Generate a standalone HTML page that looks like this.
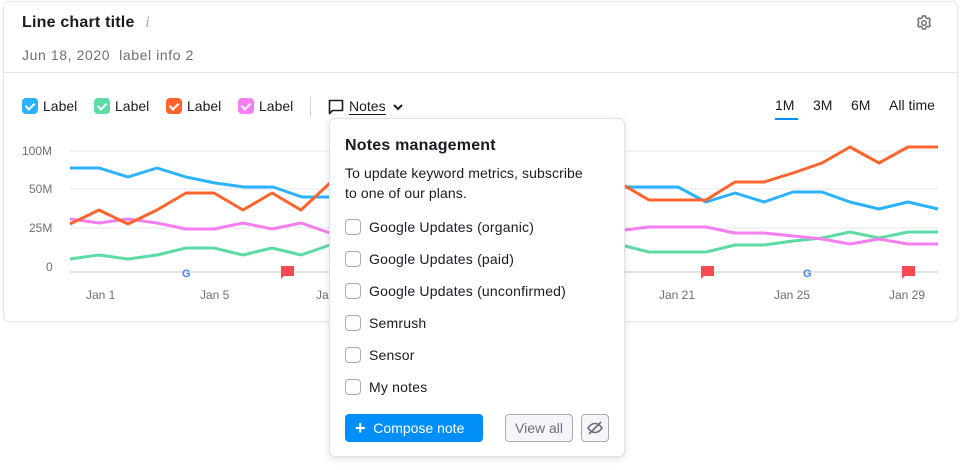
<!DOCTYPE html>
<html><head><style>
*{box-sizing:border-box;margin:0;padding:0}
body{width:960px;height:470px;background:#fff;font-family:"Liberation Sans",sans-serif;position:relative;overflow:hidden;color:#191b23}
.card{position:absolute;left:3px;top:1px;width:955px;height:321px;border:1px solid #e6e7ed;border-radius:6px;box-shadow:0 1px 2px rgba(0,0,0,.06)}
.abs{position:absolute;white-space:nowrap}
.t{left:22px;top:14px;font-size:16px;font-weight:bold;letter-spacing:.2px}
.sub{left:22px;top:47px;font-size:14px;color:#6c6e79;letter-spacing:.6px}
.hr{left:3px;top:72px;width:955px;height:1px;background:#e0e1e9}
.cb{width:16px;height:16px;border-radius:4px;display:inline-block;vertical-align:middle;position:relative}
.cb:after{content:"";position:absolute;left:5px;top:3px;width:4px;height:7px;border:solid #fff;border-width:0 2px 2px 0;transform:rotate(45deg)}
.leg{top:98px;font-size:14px;display:flex;align-items:center;gap:5px}
.ax{font-size:12px;color:#6c6e79}
.pop{left:329px;top:118px;width:296px;height:339px;background:#fff;border:1px solid #e0e1e9;border-radius:6px;box-shadow:0 2px 8px rgba(0,0,0,.12)}
.ch{width:16px;height:16px;border:1px solid #a9abb6;border-radius:4px;display:inline-block;vertical-align:middle;margin-right:8px;background:#fff}
.it{left:15px;font-size:14px;display:flex;align-items:center;letter-spacing:.2px}
</style></head><body>
<div class="card"></div>
<div class="abs t">Line chart title <span style="color:#a9abb6;font-weight:normal;font-style:italic;font-family:'Liberation Serif',serif;margin-left:6px">i</span></div>
<div class="abs sub">Jun 18, 2020 &nbsp;label info 2</div>
<svg class="abs" style="left:915px;top:14px" width="18" height="18" viewBox="0 0 24 24" fill="none" stroke="#6c6e79" stroke-width="2"><circle cx="12" cy="12" r="3"/><path d="M12 2.5l2 .3.6 2.4 1.8 1 2.3-.8 1.4 1.6-.9 2.3.5 2-.5 2 .9 2.3-1.4 1.6-2.3-.8-1.8 1-.6 2.4-2 .3-2-.3-.6-2.4-1.8-1-2.3.8-1.4-1.6.9-2.3-.5-2 .5-2-.9-2.3 1.4-1.6 2.3.8 1.8-1 .6-2.4z"/></svg>
<div class="hr abs"></div>
<div class="abs leg" style="left:22px"><span class="cb" style="background:#2bb3ff"></span>Label</div>
<div class="abs leg" style="left:94px"><span class="cb" style="background:#5cdba5"></span>Label</div>
<div class="abs leg" style="left:166px"><span class="cb" style="background:#ff642d"></span>Label</div>
<div class="abs leg" style="left:238px"><span class="cb" style="background:#f57ef0"></span>Label</div>
<div class="abs" style="left:310px;top:97px;width:1px;height:20px;background:#d1d4db"></div>
<div class="abs leg" style="left:328px"><svg width="16" height="16" viewBox="0 0 16 16"><path d="M1.5 1.5h13v10h-10l-3 3z" fill="none" stroke="#191b23" stroke-width="1.6" stroke-linejoin="round"/></svg><span style="border-bottom:1px solid #191b23;line-height:16px">Notes</span><svg width="14" height="14" viewBox="0 0 14 14"><path d="M3 5l4 4 4-4" fill="none" stroke="#191b23" stroke-width="2"/></svg></div>
<div class="abs" style="left:775px;top:97px;font-size:14px">1M</div>
<div class="abs" style="left:775px;top:118px;width:23px;height:2px;background:#008ff8"></div>
<div class="abs" style="left:813px;top:97px;font-size:14px">3M</div>
<div class="abs" style="left:851px;top:97px;font-size:14px">6M</div>
<div class="abs" style="left:889px;top:97px;font-size:14px">All time</div>
<div class="abs ax" style="left:22px;top:144px">100M</div>
<div class="abs ax" style="left:29px;top:182px">50M</div>
<div class="abs ax" style="left:29px;top:221px">25M</div>
<div class="abs ax" style="left:46px;top:260px">0</div>
<svg class="abs" style="left:0;top:0" width="960" height="320">
<g stroke="#e6e7ed" stroke-width="1"><path d="M70 151H938M70 189H938M70 228H938"/></g>
<path d="M70 272H938" stroke="#c4c7cf"/>
<g fill="none" stroke-width="3" stroke-linejoin="round">
<polyline stroke="#5cdba5" points="70,259 99,255 128,259 157,255 186,248 214,248 243,255 272,248 301,255 330,245 360,242 400,240 450,242 500,244 560,245 600,246 625,246 649,252 706,252 735,245 764,245 793,241 822,238 850,232 879,238 908,232 938,232"/>
<polyline stroke="#f57ef0" points="70,219 99,223 128,219 157,223 186,229 214,229 243,223 272,229 301,223 330,233 400,232 500,231 600,230 625,230 649,227 706,227 735,233 764,233 793,236 822,239 850,244 879,239 908,244 938,244"/>
<polyline stroke="#2bb3ff" points="70,168 99,168 128,177 157,168 186,177 215,183 244,187 273,187 302,197 331,197 400,195 500,190 600,187 625,187 678,187 706,202 735,193 764,202 793,192 822,192 850,202 879,209 908,202 938,209"/>
<polyline stroke="#ff642d" points="70,224 99,210 128,224 157,210 186,193 214,193 243,210 272,193 301,210 330,183 400,180 500,182 600,184 625,186 649,200 706,200 735,182 764,182 793,173 822,163 850,147 879,163 908,147 938,147"/>
</g>
<g font-size="11" font-weight="bold" font-family="Liberation Sans"><text x="182" y="277" fill="#4285f4">G</text><text x="803" y="277" fill="#4285f4">G</text></g>
<path d="M281 266h13v10h-10l-3 3z" fill="#ff4953"/>
<path d="M701 266h13v10h-10l-3 3z" fill="#ff4953"/>
<path d="M902 266h13v10h-10l-3 3z" fill="#ff4953"/>
<g font-size="12" fill="#6c6e79" font-family="Liberation Sans"><text x="86" y="299">Jan 1</text><text x="200" y="299">Jan 5</text><text x="316" y="299">Ja</text><text x="659" y="299">Jan 21</text><text x="774" y="299">Jan 25</text><text x="889" y="299">Jan 29</text></g>
</svg>
<div class="abs pop">
<div class="abs" style="left:15px;top:18px;font-size:16px;font-weight:bold;letter-spacing:.2px">Notes management</div>
<div class="abs" style="left:15px;top:44px;font-size:14px;line-height:20px;letter-spacing:.1px">To update keyword metrics, subscribe<br>to one of our plans.</div>
<div class="abs it" style="top:100px"><span class="ch"></span>Google Updates (organic)</div>
<div class="abs it" style="top:132px"><span class="ch"></span>Google Updates (paid)</div>
<div class="abs it" style="top:164px"><span class="ch"></span>Google Updates (unconfirmed)</div>
<div class="abs it" style="top:196px"><span class="ch"></span>Semrush</div>
<div class="abs it" style="top:228px"><span class="ch"></span>Sensor</div>
<div class="abs it" style="top:260px"><span class="ch"></span>My notes</div>
<div class="abs" style="left:15px;top:295px;width:138px;height:28px;background:#008ff8;border-radius:4px;color:#fff;font-size:14px;line-height:28px;padding-left:10px"><span style="font-size:18px;font-weight:bold;vertical-align:-1px">+</span>&nbsp; Compose note</div>
<div class="abs" style="left:175px;top:295px;width:68px;height:28px;border:1px solid #a9abb6;background:#f4f5f9;border-radius:4px;color:#6c6e79;font-size:14px;line-height:26px;text-align:center">View all</div>
<div class="abs" style="left:251px;top:295px;width:28px;height:28px;border:1px solid #a9abb6;background:#f4f5f9;border-radius:4px"><svg width="26" height="26" viewBox="0 0 26 26" fill="none" stroke="#6c6e79" stroke-width="1.6"><path d="M6 13c2-3 4.5-4.5 7-4.5s5 1.5 7 4.5c-2 3-4.5 4.5-7 4.5S8 16 6 13z"/><path d="M7 19L19 7"/></svg></div>
</div>
</body></html>
